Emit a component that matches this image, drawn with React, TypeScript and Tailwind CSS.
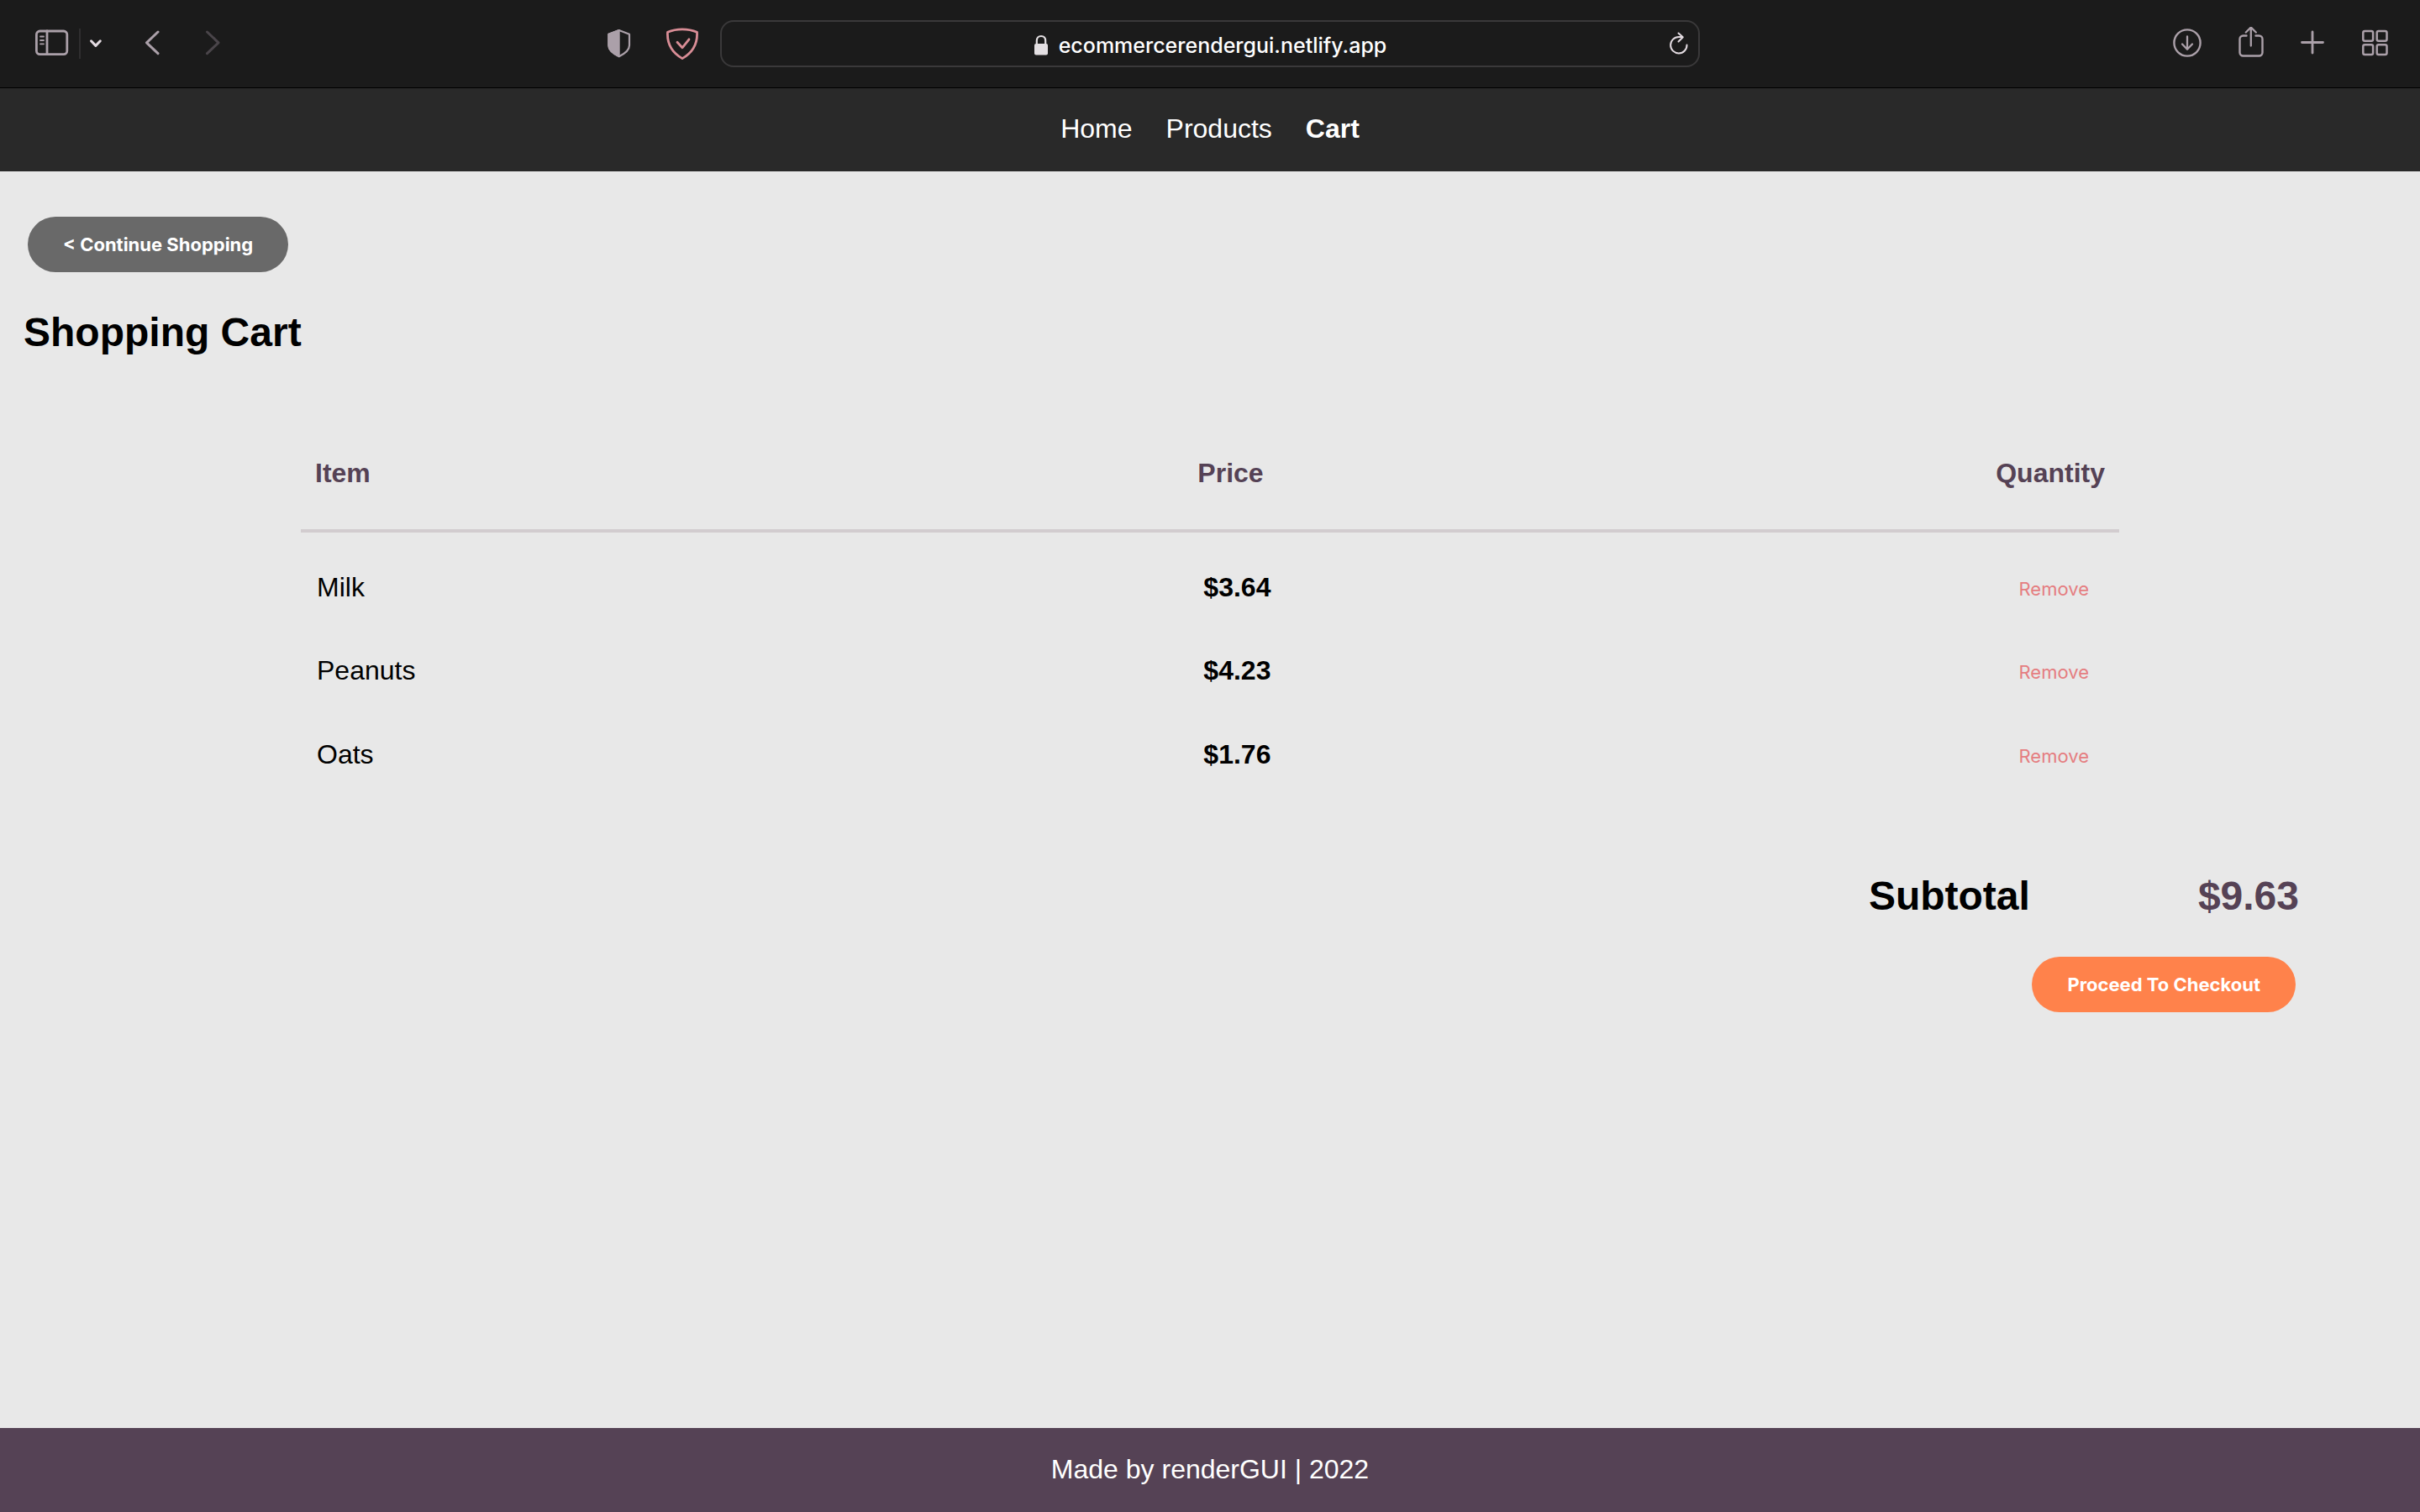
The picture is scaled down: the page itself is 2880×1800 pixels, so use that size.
import React from "react";

const items = [
  { name: "Milk", price: "$3.64" },
  { name: "Peanuts", price: "$4.23" },
  { name: "Oats", price: "$1.76" },
];

const ui = "font-[Inter,sans-serif]";

function Icon({ w, children, className = "" }: { w: number; children: React.ReactNode; className?: string }) {
  return (
    <svg
      width={w}
      height={40}
      viewBox={`0 0 ${w} 40`}
      fill="none"
      stroke="currentColor"
      strokeWidth={2.8}
      strokeLinecap="round"
      strokeLinejoin="round"
      className={className}
      aria-hidden="true"
    >
      {children}
    </svg>
  );
}

function Toolbar() {
  return (
    <div className="grid h-[105px] grid-cols-[1fr_40.5%_1fr] items-center border-b border-black bg-[#1b1b1b] text-[#aba0a9]">
      <div className="flex items-center justify-between pr-[25px] pl-[42px]">
        <div className="flex items-center">
          <button type="button" aria-label="Show sidebar">
            <Icon w={40}>
              <rect x="1.4" y="5" width="36.4" height="27.6" rx="4" />
              <path d="M14 5v27.5" />
              <path d="M6 11.5h4M6 16h4M6 20.3h4" strokeWidth={1.8} />
            </Icon>
          </button>
          <span className="ml-3 h-9 w-[2px] bg-[#2f2e2f]" />
          <button type="button" aria-label="Tab groups" className="ml-[10px] text-[#e3dbe1]">
            <Icon w={16}>
              <path d="M2.5 16.8l5.4 5.6 5.4-5.6" strokeWidth={3} />
            </Icon>
          </button>
          <button type="button" aria-label="Back" className="ml-[50px]">
            <Icon w={18}>
              <path d="M16 6L2.5 18.8 16 31.6" strokeWidth={3} />
            </Icon>
          </button>
          <button type="button" aria-label="Forward" className="ml-[54px] text-[#4a454a]">
            <Icon w={18}>
              <path d="M2.5 6L16 18.8 2.5 31.6" strokeWidth={3} />
            </Icon>
          </button>
        </div>
        <div className="flex items-center gap-10">
          <button type="button" aria-label="Privacy report">
            <Icon w={30}>
              <path d="M14.7 4L27 8.8V22c0 6-5 9.7-12.3 13.2C7.4 31.7 2.3 28 2.3 22V8.8z" strokeWidth={2.2} />
              <path d="M14.7 4v31.2C7.4 31.7 2.3 28 2.3 22V8.8z" fill="currentColor" strokeWidth={2} />
            </Icon>
          </button>
          <button type="button" aria-label="Content blocker" className="text-[#d98d96]">
            <Icon w={40}>
              <path d="M20 2.8c6 0 12 1 17.5 3.500C38.300 20 32.500 30.500 20 37.600 7.500 30.500 1.700 20 2.500 6.300 8 3.800 14 2.800 20 2.800z" strokeWidth={2.8} />
              <path d="M14 18.3l6 6.500 8-10" strokeWidth={2.8} />
            </Icon>
          </button>
        </div>
      </div>
      <div className="flex h-14 items-center rounded-[16px] border-2 border-[#3a393a] px-3">
        <span className="w-[22px]" />
        <div className={`flex flex-1 items-center justify-center gap-3 pt-[3px] text-[25px] leading-8 font-medium text-white ${ui}`}>
          <svg width="18" height="26" viewBox="0 0 18 26" fill="none" className="text-[#e3dfe2]" aria-hidden="true">
            <path d="M3.8 12V7.5C3.8 4 5.8 2 9 2s5.2 2 5.2 5.5V12" stroke="currentColor" strokeWidth="2.2" />
            <rect x="1" y="11" width="16" height="13.5" rx="2" fill="currentColor" />
          </svg>
          <span>ecommercerendergui.netlify.app</span>
        </div>
        <button type="button" aria-label="Reload" className="text-[#e3dbe1]">
          <Icon w={22}>
            <path d="M20.5 21.5A9.700 9.700 0 1 1 10.800 12H15" strokeWidth={2} />
            <path d="M10.5 7.5L15.800 12.200 10.500 17.500" strokeWidth={2} />
          </Icon>
        </button>
      </div>
      <div className="flex items-center justify-end gap-11 pr-[38px]">
        <button type="button" aria-label="Downloads">
          <Icon w={34}>
            <circle cx="17" cy="19" r="15.6" strokeWidth={2.4} />
            <path d="M17 11.5v15M11 20.5l6 6.200 6-6.200" strokeWidth={2.3} />
          </Icon>
        </button>
        <button type="button" aria-label="Share">
          <Icon w={30}>
            <path d="M9.5 10.5H5.500a4 4 0 0 0-4 4V30.500a4 4 0 0 0 4 4h19a4 4 0 0 0 4-4V14.500a4 4 0 0 0-4-4H20.500" strokeWidth={2.4} />
            <path d="M14.8 22.5V1M8.800 6.500l6-6 6 6" strokeWidth={2.3} />
          </Icon>
        </button>
        <button type="button" aria-label="New tab">
          <Icon w={28}>
            <path d="M14 6v25M1.5 18.5h25" />
          </Icon>
        </button>
        <button type="button" aria-label="Tab overview">
          <Icon w={32}>
            <rect x="2.3" y="5" width="11.8" height="11.8" rx="2" strokeWidth={2.5} />
            <rect x="18.7" y="5" width="11.8" height="11.8" rx="2" strokeWidth={2.5} />
            <rect x="2.3" y="21.3" width="11.8" height="11.8" rx="2" strokeWidth={2.5} />
            <rect x="18.7" y="21.3" width="11.8" height="11.8" rx="2" strokeWidth={2.5} />
          </Icon>
        </button>
      </div>
    </div>
  );
}

export default function App() {
  return (
    <div className="flex min-h-screen flex-col bg-[#e8e8e8] font-['Liberation_Sans',Arial,sans-serif] text-[32px] leading-9 text-black">
      <Toolbar />
      <nav className="flex justify-center gap-10 bg-[#292929] pt-[30px] pb-[33px] text-white">
        <a href="#home">Home</a>
        <a href="#products">Products</a>
        <a href="#cart" className="font-bold">Cart</a>
      </nav>
      <main className="flex-1">
        <div className="px-7 pt-[54px]">
          <button type="button" className={`ml-[5px] flex h-[66px] items-center rounded-full bg-[#696969] px-[42px] text-[22px] font-bold text-white ${ui}`}>
            &lt; Continue Shopping
          </button>
          <h1 className="mt-[45px] text-[48px] leading-[54px] font-bold">Shopping Cart</h1>
        </div>
        <div className="mx-[358px] mt-[113px]">
          <table className="w-full table-fixed border-collapse">
            <thead>
              <tr className="border-b-4 border-[#d2cccf] text-left align-top text-[#554255]">
                <th scope="col" className="h-24 w-[49%] pt-[9px] pl-[17px]">Item</th>
                <th scope="col" className="pt-[9px] pl-[7px]">Price</th>
                <th scope="col" className="w-1/4 pt-[9px] pr-[17px] text-right">Quantity</th>
              </tr>
            </thead>
            <tbody>
              {items.map((item) => (
                <tr key={item.name}>
                  <td className="h-[100px] pt-8 pl-[19px]">{item.name}</td>
                  <td className="pt-8 pl-[14px] font-bold">{item.price}</td>
                  <td className="pt-8 pr-9 text-right">
                    <button type="button" aria-label={`Remove ${item.name}`} className={`text-[22px] text-[#e57d80] ${ui}`}>
                      Remove
                    </button>
                  </td>
                </tr>
              ))}
            </tbody>
          </table>
        </div>
        <section className="mt-[108px] flex flex-col items-end pr-[144px]">
          <div className="flex gap-[200px] text-[48px] leading-[54px] font-bold">
            <h2>Subtotal</h2>
            <span className="text-[#554255]">$9.63</span>
          </div>
          <button type="button" className={`mt-[45px] mr-1 flex h-[66px] items-center rounded-full bg-[#ff824b] px-[42px] text-[22px] font-bold text-white ${ui}`}>
            Proceed To Checkout
          </button>
        </section>
      </main>
      <footer className="bg-[#554255] pt-[31px] pb-[33px] text-center text-white">Made by renderGUI | 2022</footer>
    </div>
  );
}
